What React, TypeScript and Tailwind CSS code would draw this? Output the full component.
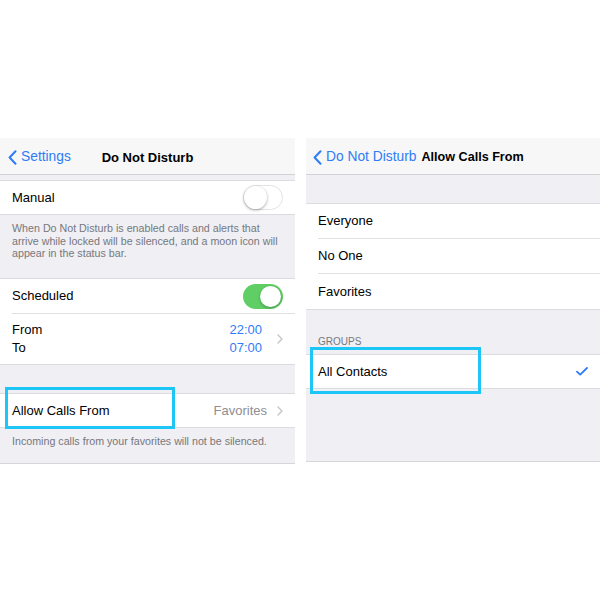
import React from "react";

const font = { fontFamily: '"Liberation Sans", Arial, sans-serif' };

function BackChevron() {
  return (
    <svg width="9" height="15" viewBox="0 0 9 15" className="shrink-0">
      <path d="M7.5 1.2 L1.6 7.5 L7.5 13.8" fill="none" stroke="#2f7cf6" strokeWidth="2" strokeLinecap="round" strokeLinejoin="round" />
    </svg>
  );
}

function Chevron() {
  return (
    <svg width="6" height="10" viewBox="0 0 6 10" className="shrink-0">
      <path d="M1 1 L5 5 L1 9" fill="none" stroke="#c4c4c9" strokeWidth="1.3" strokeLinecap="round" strokeLinejoin="round" />
    </svg>
  );
}

function Check() {
  return (
    <svg width="12" height="9" viewBox="0 0 12 9">
      <path d="M1 4.6 L4.2 7.6 L11 1" fill="none" stroke="#2f7cf6" strokeWidth="1.8" strokeLinecap="round" strokeLinejoin="round" />
    </svg>
  );
}

function Toggle({ on }: { on: boolean }) {
  return on ? (
    <div className="flex h-[25px] w-[40px] items-center justify-end rounded-full bg-[#5fcf65] p-[2px]">
      <div className="size-[21px] rounded-full bg-white shadow-[0_1px_3px_rgba(0,0,0,0.3)]" />
    </div>
  ) : (
    <div className="flex h-[25px] w-[40px] items-center rounded-full border border-[#e3e3e6] bg-white">
      <div className="size-[23px] rounded-full bg-white shadow-[0_1px_3px_rgba(0,0,0,0.35)]" />
    </div>
  );
}

function Highlight({ className }: { className: string }) {
  return <div className={`pointer-events-none absolute border-[3px] border-[#1ec6f7] ${className}`} />;
}

export default function App() {
  return (
    <div className="relative h-[600px] w-[600px] overflow-hidden bg-white text-[13px] text-black" style={font}>
      <div className="flex pt-[138px]">
        {/* Left: Do Not Disturb */}
        <div className="w-[295px] border-b border-[#d6d6da] bg-[#efeff4]">
          <div className="relative flex h-[37px] items-center border-b border-[#d2d2d6] bg-[#f7f7f8] px-[8px] pt-[3px]">
            <div className="flex items-center gap-[4px] text-[13.8px] text-[#2f7cf6]">
              <BackChevron />
              <span>Settings</span>
            </div>
            <div className="absolute inset-x-0 text-center font-bold">Do Not Disturb</div>
          </div>
          <div className="h-[5px]" />
          <div className="flex h-[35px] items-center justify-between border-y border-[#dcdce0] bg-white pl-[12px] pr-[12px]">
            <span>Manual</span>
            <Toggle on={false} />
          </div>
          <div className="h-[63px] px-[12px] pt-[7px] text-[10.7px] leading-[12.5px] text-[#77777c]">
            When Do Not Disturb is enabled calls and alerts that arrive while locked will be silenced, and a moon icon will appear in the status bar.
          </div>
          <div className="border-y border-[#dcdce0] bg-white">
            <div className="ml-[12px] flex h-[35px] items-center justify-between border-b border-[#e0e0e4] pr-[12px]">
              <span>Scheduled</span>
              <Toggle on />
            </div>
            <div className="flex h-[50px] items-center justify-between px-[12px]">
              <div className="flex flex-col leading-[18px]">
                <span>From</span>
                <span>To</span>
              </div>
              <div className="flex items-center gap-[15px]">
                <div className="flex flex-col leading-[18px] text-[#2f7cf6]">
                  <span>22:00</span>
                  <span>07:00</span>
                </div>
                <Chevron />
              </div>
            </div>
          </div>
          <div className="h-[28px]" />
          <div className="flex h-[35px] items-center justify-between border-y border-[#dcdce0] bg-white px-[12px]">
            <span>Allow Calls From</span>
            <div className="flex items-center gap-[10px] text-[#8e8e93]">
              <span>Favorites</span>
              <Chevron />
            </div>
          </div>
          <div className="h-[35px] px-[12px] pt-[5px] text-[10.7px] text-[#77777c]">
            Incoming calls from your favorites will not be silenced.
          </div>
        </div>

        <div className="w-[11px]" />

        {/* Right: Allow Calls From */}
        <div className="h-[324px] flex-1 border-b border-[#d6d6da] bg-[#efeff4]">
          <div className="flex h-[37px] items-center gap-[5px] border-b border-[#d2d2d6] bg-[#f7f7f8] px-[7px] pt-[3px]">
            <div className="flex items-center gap-[4px] text-[13.8px] text-[#2f7cf6]">
              <BackChevron />
              <span>Do Not Disturb</span>
            </div>
            <span className="text-[12.6px] font-bold">Allow Calls From</span>
          </div>
          <div className="h-[28px]" />
          <div className="border-y border-[#dcdce0] bg-white">
            {["Everyone", "No One", "Favorites"].map((label, i) => (
              <div
                key={label}
                className={`ml-[12px] flex h-[35px] items-center ${i < 2 ? "border-b border-[#e0e0e4]" : ""}`}
              >
                {label}
              </div>
            ))}
          </div>
          <div className="flex h-[44px] items-end px-[12px] pb-[5px] text-[10px] text-[#77777c]">GROUPS</div>
          <div className="flex h-[35px] items-center justify-between border-y border-[#dcdce0] bg-white pl-[12px] pr-[12px]">
            <span>All Contacts</span>
            <Check />
          </div>
        </div>
      </div>

      <Highlight className="left-[5px] top-[387px] h-[42px] w-[170px]" />
      <Highlight className="left-[310px] top-[347px] h-[47px] w-[171px]" />
    </div>
  );
}
